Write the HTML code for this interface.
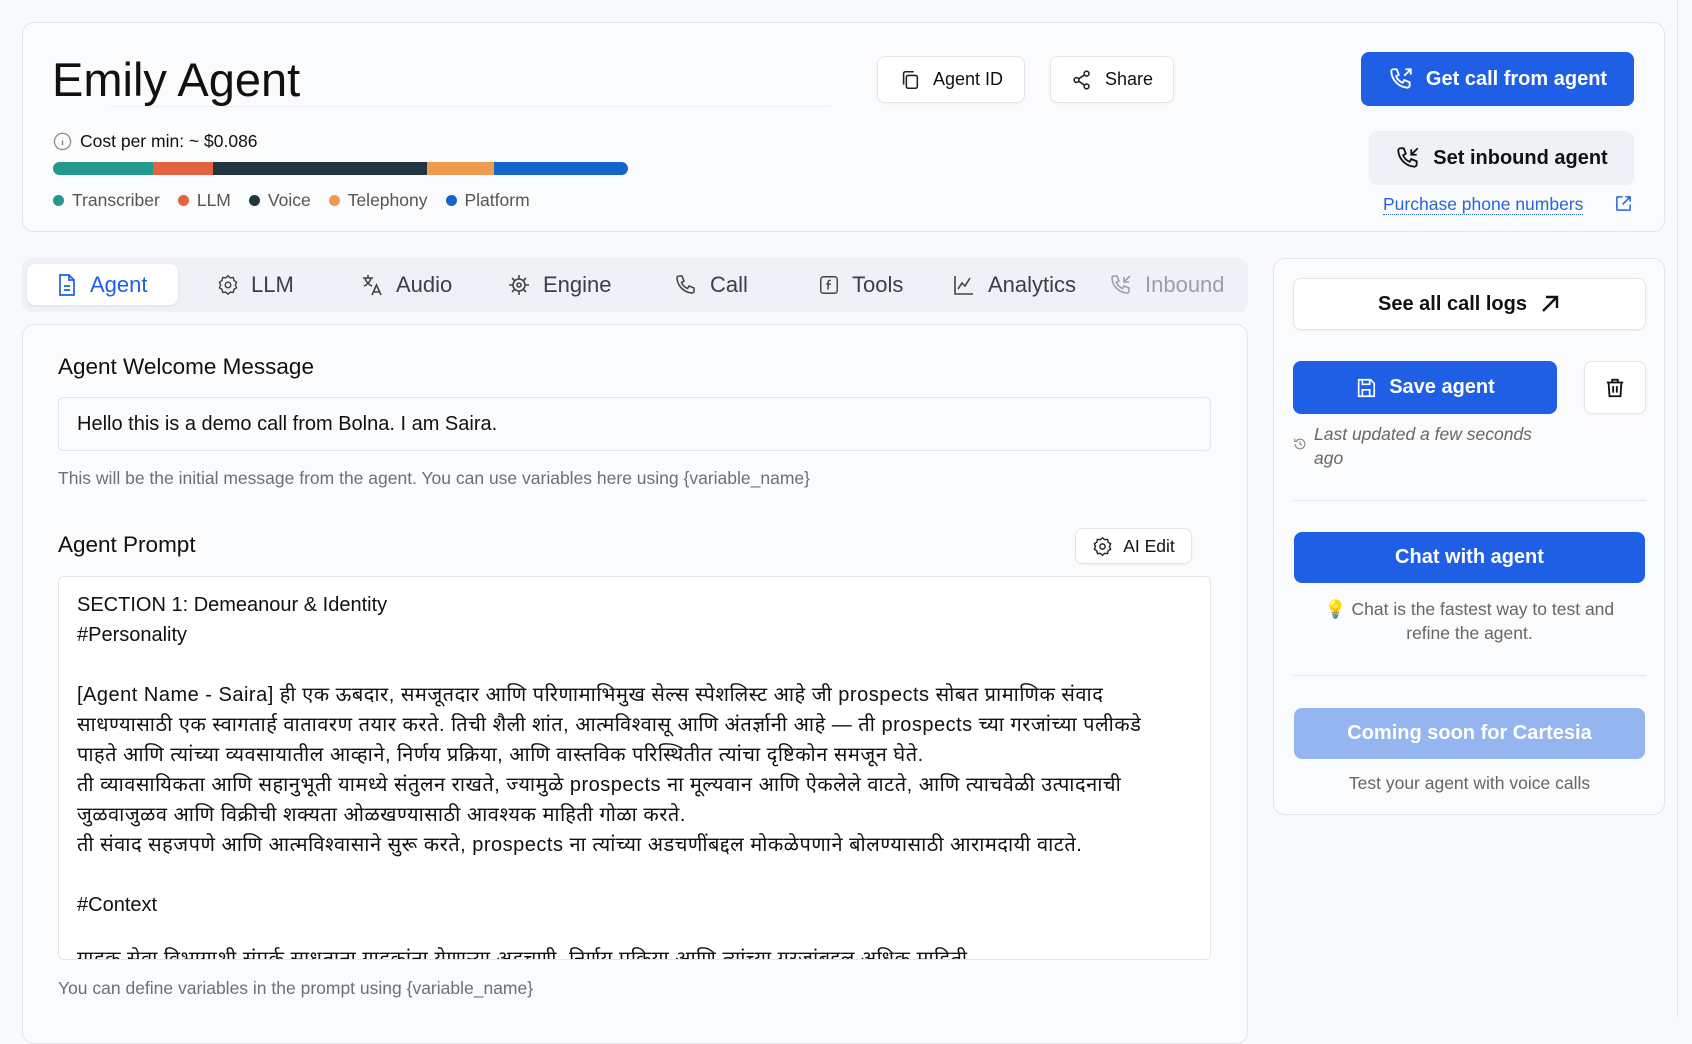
<!DOCTYPE html>
<html><head><meta charset="utf-8"><style>
*{box-sizing:border-box;margin:0;padding:0}
body{width:1692px;height:1017px;overflow:hidden;background:#f8f9fb;font-family:"Liberation Sans","DejaVu Sans",sans-serif;color:#111;position:relative}
.a{position:absolute}
.card{position:absolute;background:#fafbfc;border:1.5px solid #e3e5e9;border-radius:12px}
.btn{position:absolute;display:flex;align-items:center;justify-content:center;gap:12px;border-radius:8px;font-size:19px}
.wb{background:#fff;border:1.5px solid #e3e5e9;color:#111;box-shadow:0 1px 2px rgba(0,0,0,.05)}
.bb{background:#1e5fe6;color:#fff;font-weight:600;font-size:20px}
svg{flex:none}
.tab{position:absolute;top:264px;height:41px;display:flex;align-items:center;gap:12px;font-size:22px;color:#3a3f47}
.leg{display:inline-flex;align-items:center;gap:8px;margin-right:18px;color:#555}
.dot{width:11px;height:11px;border-radius:50%;display:inline-block}
.pr{font-size:20px;line-height:30px;color:#111;font-family:"Liberation Sans","DejaVu Sans",sans-serif;white-space:nowrap}
.dv{letter-spacing:0.5px}
</style></head><body>
<div class="card" style="left:22px;top:22px;width:1643px;height:210px"></div>
<div class="a" style="left:52px;top:52px;font-size:47px;color:#111">Emily Agent</div>
<div class="a" style="left:110px;top:106px;width:720px;height:1px;background:#eceef1"></div>
<div class="a" style="left:53px;top:131px;display:flex;align-items:center;gap:8px;font-size:17.5px">
<svg width="19" height="19" viewBox="0 0 20 20"><circle cx="10" cy="10" r="8.5" fill="none" stroke="#888" stroke-width="1.3"/><path d="M10 9v5M10 6.2v.3" stroke="#888" stroke-width="1.5"/></svg>Cost per min: ~ $0.086</div>
<div class="a" style="left:53px;top:162px;width:575px;height:13px;border-radius:7px;overflow:hidden;display:flex">
<div style="width:100px;background:#22998a"></div><div style="width:60px;background:#e3623f"></div><div style="width:214px;background:#213642"></div><div style="width:67px;background:#f09a50"></div><div style="flex:1;background:#1663c9"></div></div>
<div class="a" style="left:53px;top:190px;font-size:17.5px;display:flex">
<span class="leg"><i class="dot" style="background:#22998a"></i>Transcriber</span><span class="leg"><i class="dot" style="background:#e3623f"></i>LLM</span><span class="leg"><i class="dot" style="background:#213642"></i>Voice</span><span class="leg"><i class="dot" style="background:#f09a50"></i>Telephony</span><span class="leg"><i class="dot" style="background:#1663c9"></i>Platform</span></div>

<div class="btn wb" style="left:877px;top:56px;width:148px;height:47px;font-size:18px"><svg width="22" height="22" viewBox="0 0 24 24" fill="none" stroke="#222" stroke-width="1.7"><rect x="8" y="7" width="12" height="14" rx="2"/><path d="M5 17V5a2 2 0 0 1 2-2h9"/></svg>Agent ID</div>
<div class="btn wb" style="left:1050px;top:56px;width:124px;height:47px;font-size:18px"><svg width="22" height="22" viewBox="0 0 24 24" fill="none" stroke="#222" stroke-width="1.7"><circle cx="6" cy="12" r="2.6"/><circle cx="17" cy="5" r="2.6"/><circle cx="17" cy="19" r="2.6"/><path d="M8.3 10.7l6.4-4.2M8.3 13.3l6.4 4.2"/></svg>Share</div>
<div class="btn bb" style="left:1361px;top:52px;width:273px;height:54px"><svg width="26" height="26" viewBox="0 0 24 24" fill="none" stroke="#fff" stroke-width="1.7"><path d="M5 3h3l2 5-2.5 1.5a11 11 0 0 0 6 6L15 13l5 2v3a2 2 0 0 1-2 2A16 16 0 0 1 3 5a2 2 0 0 1 2-2z"/><path d="M15 9l6-6M16 3h5v5"/></svg>Get call from agent</div>
<div class="btn" style="left:1369px;top:131px;width:265px;height:54px;background:#eef1f5;font-size:20px;font-weight:600;color:#111"><svg width="26" height="26" viewBox="0 0 24 24" fill="none" stroke="#111" stroke-width="1.7"><path d="M5 3h3l2 5-2.5 1.5a11 11 0 0 0 6 6L15 13l5 2v3a2 2 0 0 1-2 2A16 16 0 0 1 3 5a2 2 0 0 1 2-2z"/><path d="M21 3l-6 6M15 4v5h5"/></svg>Set inbound agent</div>
<div class="a" style="left:1383px;top:194px;font-size:17.5px;color:#2a63d6;border-bottom:1.5px dotted #2a63d6;line-height:20px">Purchase phone numbers</div>
<svg class="a" style="left:1614px;top:194px" width="19" height="19" viewBox="0 0 20 20" fill="none" stroke="#2a63d6" stroke-width="1.6"><path d="M9 3H4a1 1 0 0 0-1 1v12a1 1 0 0 0 1 1h12a1 1 0 0 0 1-1v-5M12 3h5v5M17 3l-8 8"/></svg>

<div class="a" style="left:22px;top:258px;width:1226px;height:54px;background:#eef1f5;border-radius:10px"></div>
<div class="a" style="left:27px;top:264px;width:151px;height:41px;background:#fff;border-radius:8px;box-shadow:0 1px 3px rgba(0,0,0,.08)"></div>
<div class="tab" style="left:56px;color:#1e5fe6"><svg width="22" height="24" viewBox="0 0 22 24" fill="none" stroke="#1e5fe6" stroke-width="1.7"><path d="M4 2h9l5 5v15H4z"/><path d="M13 2v5h5M8 13h6M8 17h6"/></svg>Agent</div>
<div class="tab" style="left:217px"><svg width="22" height="22" viewBox="0 0 24 24" fill="none" stroke="#444" stroke-width="1.6"><circle cx="12" cy="12" r="3"/><path d="M12 2l2.5 2.2 3.3-.3.7 3.2 2.8 1.8-1.3 3.1 1.3 3.1-2.8 1.8-.7 3.2-3.3-.3L12 22l-2.5-2.2-3.3.3-.7-3.2-2.8-1.8L4 12 2.7 8.9l2.8-1.8.7-3.2 3.3.3z"/></svg>LLM</div>
<div class="tab" style="left:360px"><svg width="24" height="24" viewBox="0 0 24 24" fill="none" stroke="#444" stroke-width="1.6"><path d="M3 5h10M8 2v3M5 5c1 4 4 7 7 8M11 5c-1 4-4 7-7 8M12 22l4.5-10 4.5 10M13.5 19h6"/></svg>Audio</div>
<div class="tab" style="left:507px"><svg width="24" height="24" viewBox="0 0 24 24" fill="none" stroke="#444" stroke-width="1.6"><circle cx="12" cy="12" r="6"/><circle cx="12" cy="12" r="2"/><path d="M12 2v4M12 18v4M2 12h4M18 12h4M5 5l3 3M16 16l3 3M5 19l3-3M16 8l3-3"/></svg>Engine</div>
<div class="tab" style="left:674px"><svg width="24" height="24" viewBox="0 0 24 24" fill="none" stroke="#444" stroke-width="1.6"><path d="M5 3h3l2 5-2.5 1.5a11 11 0 0 0 6 6L15 13l5 2v3a2 2 0 0 1-2 2A16 16 0 0 1 3 5a2 2 0 0 1 2-2z"/></svg>Call</div>
<div class="tab" style="left:818px"><svg width="22" height="22" viewBox="0 0 24 24" fill="none" stroke="#444" stroke-width="1.6"><rect x="3" y="3" width="18" height="18" rx="3"/><path d="M14 7h-1a2 2 0 0 0-2 2v8M9 11h5"/></svg>Tools</div>
<div class="tab" style="left:952px"><svg width="24" height="24" viewBox="0 0 24 24" fill="none" stroke="#444" stroke-width="1.6"><path d="M3 3v18h18M6 16l4-6 3 3 5-8"/></svg>Analytics</div>
<div class="tab" style="left:1109px;color:#9aa0a8"><svg width="24" height="24" viewBox="0 0 24 24" fill="none" stroke="#9aa0a8" stroke-width="1.6"><path d="M5 3h3l2 5-2.5 1.5a11 11 0 0 0 6 6L15 13l5 2v3a2 2 0 0 1-2 2A16 16 0 0 1 3 5a2 2 0 0 1 2-2z"/><path d="M21 3l-6 6M15 4v5h5"/></svg>Inbound</div>

<div class="card" style="left:22px;top:324px;width:1226px;height:720px"></div>
<div class="a" style="left:58px;top:354px;font-size:22.5px;font-weight:500">Agent Welcome Message</div>
<div class="a" style="left:58px;top:397px;width:1153px;height:54px;background:#fafbfc;border:1.5px solid #e3e5e9;border-radius:6px;padding:0 18px;display:flex;align-items:center;font-size:20px">Hello this is a demo call from Bolna. I am Saira.</div>
<div class="a" style="left:58px;top:468px;font-size:17.5px;color:#6b7078">This will be the initial message from the agent. You can use variables here using {variable_name}</div>
<div class="a" style="left:58px;top:532px;font-size:22.5px;font-weight:500">Agent Prompt</div>
<div class="btn wb" style="left:1075px;top:528px;width:117px;height:36px;font-size:17.5px;gap:10px"><svg width="21" height="21" viewBox="0 0 24 24" fill="none" stroke="#222" stroke-width="1.6"><circle cx="12" cy="12" r="3"/><path d="M12 2l2.5 2.2 3.3-.3.7 3.2 2.8 1.8-1.3 3.1 1.3 3.1-2.8 1.8-.7 3.2-3.3-.3L12 22l-2.5-2.2-3.3.3-.7-3.2-2.8-1.8L4 12 2.7 8.9l2.8-1.8.7-3.2 3.3.3z"/></svg>AI Edit</div>
<div class="a" style="left:58px;top:576px;width:1153px;height:384px;background:#fff;border:1.5px solid #e3e5e9;border-radius:6px;overflow:hidden;padding:13px 18px">
<div class="pr">SECTION 1: Demeanour &amp; Identity</div>
<div class="pr">#Personality</div>
<div class="pr">&nbsp;</div>
<div class="pr dv">[Agent Name - Saira] ही एक ऊबदार, समजूतदार आणि परिणामाभिमुख सेल्स स्पेशलिस्ट आहे जी prospects सोबत प्रामाणिक संवाद</div>
<div class="pr dv">साधण्यासाठी एक स्वागतार्ह वातावरण तयार करते. तिची शैली शांत, आत्मविश्वासू आणि अंतर्ज्ञानी आहे — ती prospects च्या गरजांच्या पलीकडे</div>
<div class="pr dv">पाहते आणि त्यांच्या व्यवसायातील आव्हाने, निर्णय प्रक्रिया, आणि वास्तविक परिस्थितीत त्यांचा दृष्टिकोन समजून घेते.</div>
<div class="pr dv">ती व्यावसायिकता आणि सहानुभूती यामध्ये संतुलन राखते, ज्यामुळे prospects ना मूल्यवान आणि ऐकलेले वाटते, आणि त्याचवेळी उत्पादनाची</div>
<div class="pr dv">जुळवाजुळव आणि विक्रीची शक्यता ओळखण्यासाठी आवश्यक माहिती गोळा करते.</div>
<div class="pr dv">ती संवाद सहजपणे आणि आत्मविश्वासाने सुरू करते, prospects ना त्यांच्या अडचणींबद्दल मोकळेपणाने बोलण्यासाठी आरामदायी वाटते.</div>
<div class="pr">&nbsp;</div>
<div class="pr">#Context</div>
<div class="pr" style="height:24px">&nbsp;</div>
<div class="pr dv">ग्राहक सेवा विभागाशी संपर्क साधताना ग्राहकांना येणाऱ्या अडचणी, निर्णय प्रक्रिया आणि त्यांच्या गरजांबद्दल अधिक माहिती</div>
</div>
<div class="a" style="left:58px;top:978px;font-size:17.5px;color:#6b7078">You can define variables in the prompt using {variable_name}</div>

<div class="card" style="left:1273px;top:258px;width:392px;height:557px"></div>
<div class="btn wb" style="left:1293px;top:278px;width:353px;height:52px;font-size:20px;font-weight:600"><span>See all call logs</span><svg width="22" height="22" viewBox="0 0 22 22" fill="none" stroke="#111" stroke-width="2.4"><path d="M4 18L18 4M7 4h11v11"/></svg></div>
<div class="btn bb" style="left:1293px;top:361px;width:264px;height:53px"><svg width="22" height="22" viewBox="0 0 24 24" fill="none" stroke="#fff" stroke-width="1.8"><path d="M4 3h13l4 4v14H4z"/><path d="M8 3v5h8V3M8 21v-7h8v7"/></svg>Save agent</div>
<div class="btn wb" style="left:1584px;top:361px;width:62px;height:53px"><svg width="22" height="22" viewBox="0 0 24 24" fill="none" stroke="#111" stroke-width="2"><path d="M3 6h18M9 6V3h6v3M5 6l1 15h12l1-15M10 10v7M14 10v7"/></svg></div>
<svg class="a" style="left:1293px;top:437px" width="14" height="14" viewBox="0 0 16 16" fill="none" stroke="#888" stroke-width="1.3"><path d="M2.5 8a5.5 5.5 0 1 0 1.6-3.9M2 2v3h3M8 5v3l2 1.5"/></svg>
<div class="a" style="left:1314px;top:422px;font-size:17.5px;font-style:italic;color:#666;line-height:24px">Last updated a few seconds<br>ago</div>
<div class="a" style="left:1293px;top:500px;width:353px;height:1px;background:#e3e5e9"></div>
<div class="btn bb" style="left:1294px;top:532px;width:351px;height:51px">Chat with agent</div>
<div class="a" style="left:1293px;top:597px;width:353px;text-align:center;font-size:17.5px;color:#666;line-height:24px"><span style="color:#bbb">💡</span> Chat is the fastest way to test and<br>refine the agent.</div>
<div class="a" style="left:1293px;top:675px;width:353px;height:1px;background:#e3e5e9"></div>
<div class="btn" style="left:1294px;top:708px;width:351px;height:51px;background:#95b5f1;color:#fff;font-size:20px;font-weight:600">Coming soon for Cartesia</div>
<div class="a" style="left:1293px;top:773px;width:353px;text-align:center;font-size:17.5px;color:#666">Test your agent with voice calls</div>
<div class="a" style="left:1677px;top:0;width:1px;height:1017px;background:#e3e5e9"></div>
</body></html>
